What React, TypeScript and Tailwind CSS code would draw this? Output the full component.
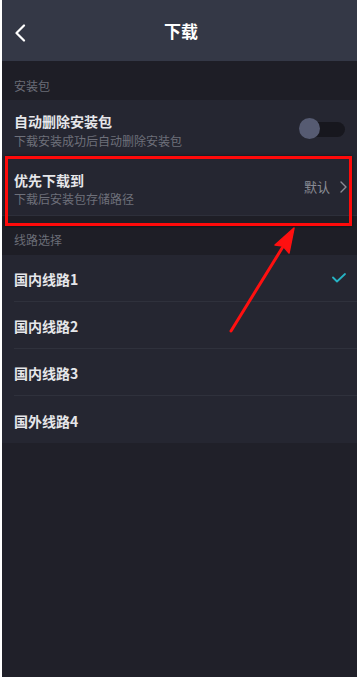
import React from 'react';

const font = { fontFamily: '"Noto Sans CJK SC", "Noto Sans", sans-serif' };

const routes = ['国内线路1', '国内线路2', '国内线路3', '国外线路4'];

function Toggle() {
  return (
    <div className="relative h-[21px] w-[46px]">
      <div className="absolute left-[4px] right-0 top-[4px] h-[15px] rounded-full bg-[#17171e]" />
      <div className="absolute left-0 top-0 h-[21px] w-[21px] rounded-full bg-[#565b72]" />
    </div>
  );
}

export default function App() {
  return (
    <div className="relative flex h-[678px] w-full flex-col bg-white px-[2px] pb-[1px]" style={font}>
      <div className="flex flex-1 flex-col bg-[#202029]">
        {/* Header */}
        <div className="relative flex h-[61px] items-center justify-center bg-[#343846]">
          <svg className="absolute left-[12px] top-[24px]" width="12" height="18" viewBox="0 0 12 18" fill="none">
            <path d="M10 1.5 L2.5 9 L10 16.5" stroke="#ffffff" strokeWidth="2.2" strokeLinecap="round" strokeLinejoin="round" />
          </svg>
          <span className="ml-[3px] text-[17px] font-bold leading-none text-white">下载</span>
        </div>

        {/* Section: 安装包 */}
        <div className="flex h-[39px] items-end bg-[#1e1e26] pb-[6px] pl-[12px]">
          <span className="text-[12px] leading-[16px] text-[#6b6d77]">安装包</span>
        </div>

        <div className="flex h-[55px] items-start justify-between bg-[#252631] pl-[12px] pr-[12px] pt-[12px]">
          <div className="flex flex-col">
            <span className="text-[14px] font-bold leading-[18px] text-[#e6e6ea]">自动删除安装包</span>
            <span className="mt-[3px] text-[12px] leading-[16px] text-[#6e707a]">下载安装成功后自动删除安装包</span>
          </div>
          <div className="mt-[6px]">
            <Toggle />
          </div>
        </div>

        <div className="flex h-[61px] items-start justify-between border-b border-[#2d2f3a] bg-[#252631] pl-[12px] pr-[10px] pt-[16px]">
          <div className="flex flex-col">
            <span className="text-[14px] font-bold leading-[18px] text-[#e6e6ea]">优先下载到</span>
            <span className="mt-[2px] text-[12px] leading-[16px] text-[#6e707a]">下载后安装包存储路径</span>
          </div>
          <div className="mt-[8px] flex items-center gap-[10px]">
            <span className="text-[13px] leading-[16px] text-[#8a8c95]">默认</span>
            <svg width="7" height="12" viewBox="0 0 7 12" fill="none">
              <path d="M1 1 L6 6 L1 11" stroke="#8a8c95" strokeWidth="1.4" strokeLinecap="round" strokeLinejoin="round" />
            </svg>
          </div>
        </div>

        {/* Section: 线路选择 */}
        <div className="flex h-[39px] items-end bg-[#1e1e26] pb-[7px] pl-[12px]">
          <span className="text-[12px] leading-[16px] text-[#6b6d77]">线路选择</span>
        </div>

        <div className="flex flex-col bg-[#252631] pl-[12px]">
          {routes.map((r, i) => (
            <div
              key={r}
              className={
                i < routes.length - 1
                  ? 'flex h-[47px] items-center justify-between border-b border-[#2f313c] pr-[11px]'
                  : 'flex h-[47px] items-center justify-between pr-[11px]'
              }
            >
              <span className="pt-[2px] text-[14px] font-bold leading-[18px] text-[#e6e6ea]">{r}</span>
              {i === 0 && (
                <svg width="14" height="10" viewBox="0 0 14 10" fill="none">
                  <path d="M1 4.5 L5 8.5 L13 1" stroke="#26b3c4" strokeWidth="1.8" strokeLinecap="round" strokeLinejoin="round" />
                </svg>
              )}
            </div>
          ))}
        </div>
      </div>

      {/* Annotation overlay */}
      <div className="pointer-events-none absolute left-[5px] top-[156px] h-[70px] w-[347px] border-[3px] border-[#ff0a0a] shadow-[0_0_3px_rgba(0,0,0,0.6)]" />
      <svg className="pointer-events-none absolute left-0 top-0" width="359" height="678" viewBox="0 0 359 678">
        <line x1="231" y1="331" x2="284" y2="245" stroke="#ff1010" strokeWidth="3" strokeLinecap="round" />
        <path d="M294 228 L289 253 L283 246 L275 245 Z" fill="#ff1010" stroke="#ff1010" strokeWidth="1.5" strokeLinejoin="round" />
      </svg>
    </div>
  );
}
